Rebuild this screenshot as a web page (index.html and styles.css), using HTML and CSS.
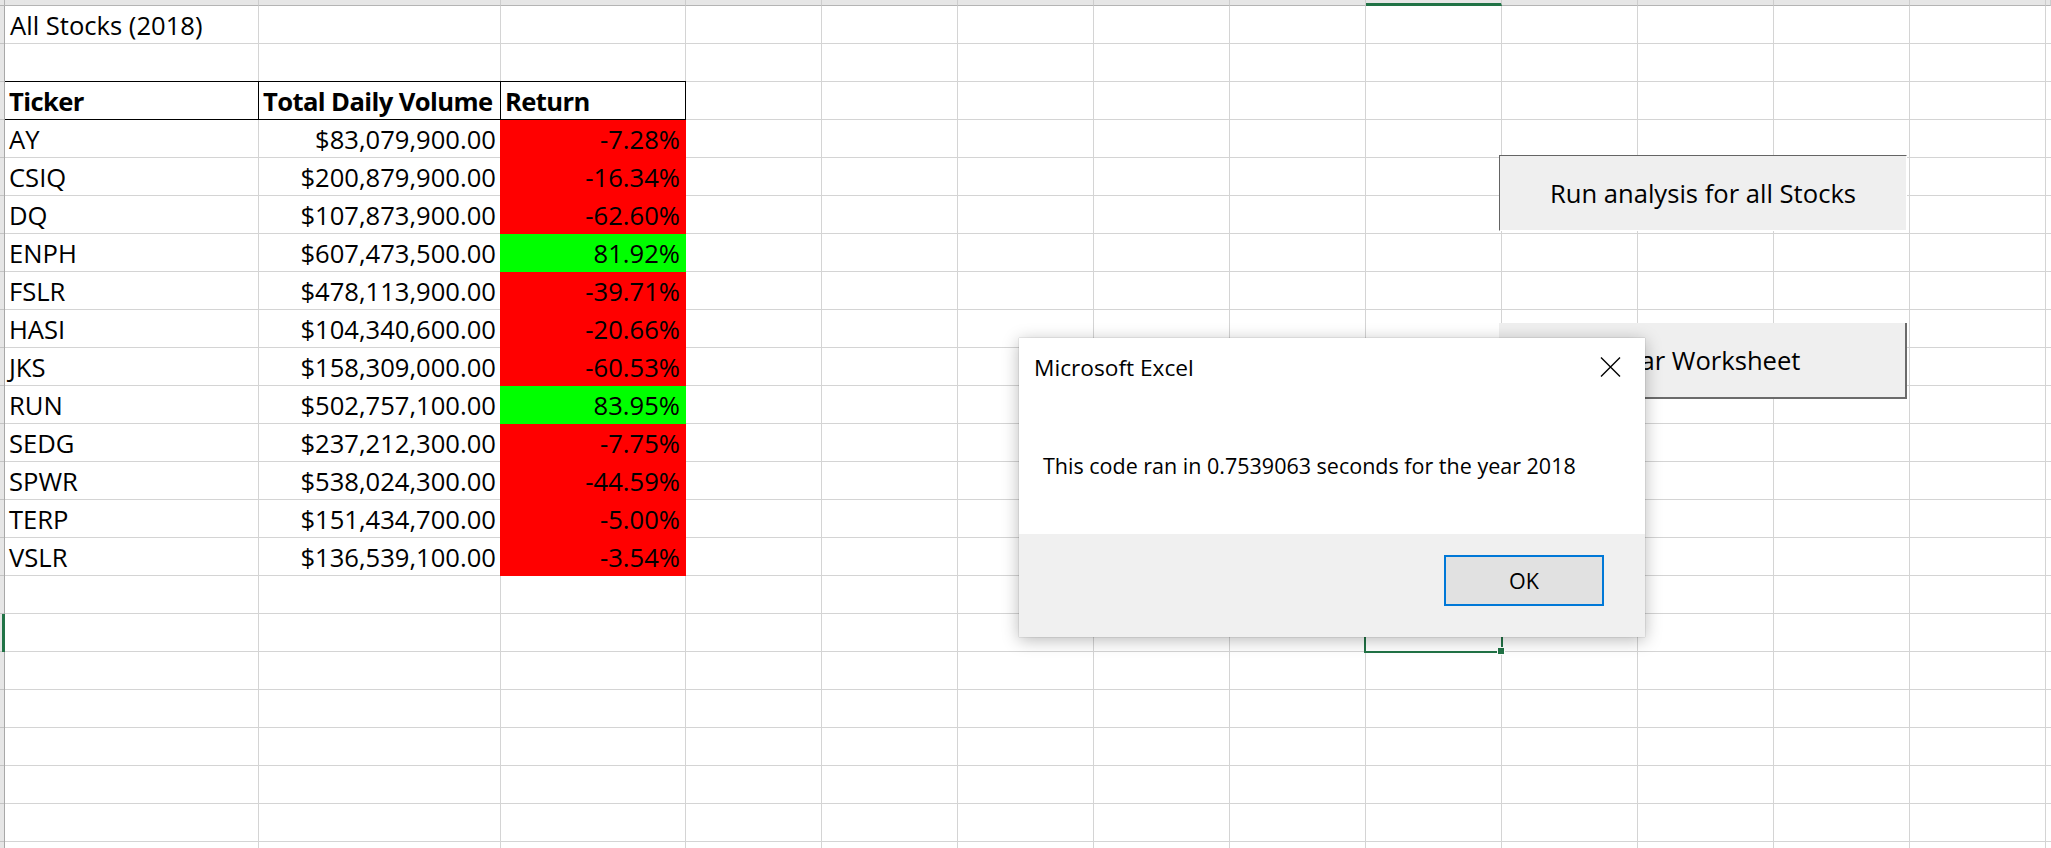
FILE: index.html
```html
<!DOCTYPE html>
<html lang="en">
<head>
<meta charset="utf-8">
<title>All Stocks (2018)</title>
<link rel="stylesheet" href="styles.css">
</head>
<body>
<div class="excel">
  <div class="colhead">
    <div class="ch corner"></div>
    <div class="ch"></div><div class="ch"></div><div class="ch"></div>
    <div class="ch"></div><div class="ch"></div><div class="ch"></div>
    <div class="ch"></div><div class="ch"></div><div class="ch sel"></div>
    <div class="ch"></div><div class="ch"></div><div class="ch"></div>
    <div class="ch"></div><div class="ch"></div>
  </div>
  <div class="sheet">
    <div class="rowhead"><div class="rowhead-sel"></div></div>
    <div class="grid">
      <div class="table">
        <div class="c title">All Stocks (2018)</div><div class="c"></div><div class="c"></div>
        <div class="c"></div><div class="c"></div><div class="c"></div>
        <div class="c h">Ticker</div><div class="c h">Total Daily Volume</div><div class="c h">Return</div>

        <div class="c">AY</div><div class="c num">$83,079,900.00</div><div class="c num ret neg">-7.28%</div>
        <div class="c">CSIQ</div><div class="c num">$200,879,900.00</div><div class="c num ret neg">-16.34%</div>
        <div class="c">DQ</div><div class="c num">$107,873,900.00</div><div class="c num ret neg">-62.60%</div>
        <div class="c">ENPH</div><div class="c num">$607,473,500.00</div><div class="c num ret pos">81.92%</div>
        <div class="c">FSLR</div><div class="c num">$478,113,900.00</div><div class="c num ret neg">-39.71%</div>
        <div class="c">HASI</div><div class="c num">$104,340,600.00</div><div class="c num ret neg">-20.66%</div>
        <div class="c">JKS</div><div class="c num">$158,309,000.00</div><div class="c num ret neg">-60.53%</div>
        <div class="c">RUN</div><div class="c num">$502,757,100.00</div><div class="c num ret pos">83.95%</div>
        <div class="c">SEDG</div><div class="c num">$237,212,300.00</div><div class="c num ret neg">-7.75%</div>
        <div class="c">SPWR</div><div class="c num">$538,024,300.00</div><div class="c num ret neg">-44.59%</div>
        <div class="c">TERP</div><div class="c num">$151,434,700.00</div><div class="c num ret neg">-5.00%</div>
        <div class="c">VSLR</div><div class="c num">$136,539,100.00</div><div class="c num ret neg">-3.54%</div>
      </div>

      <div class="selection"><span class="handle"></span></div>

      <button class="form-btn run">Run analysis for all Stocks</button>
      <button class="form-btn clear">Clear Worksheet</button>
    </div>
  </div>

  <div class="dialog" role="dialog">
    <div class="dlg-body">
      <div class="dlg-titlebar">
        <span class="dlg-title">Microsoft Excel</span>
        <svg class="dlg-close" width="21" height="20" viewBox="0 0 21 20" aria-label="Close">
          <path d="M1 0.5 L20 19.5 M20 0.5 L1 19.5" stroke="#000" stroke-width="1.4" fill="none"/>
        </svg>
      </div>
      <p class="dlg-msg">This code ran in 0.7539063 seconds for the year 2018</p>
    </div>
    <div class="dlg-footer">
      <button class="dlg-ok">OK</button>
    </div>
  </div>
</div>
</body>
</html>
```
FILE: styles.css
```css
* { box-sizing: border-box; margin: 0; padding: 0; }

html, body {
  width: 2051px;
  height: 848px;
  overflow: hidden;
  background: #ffffff;
}

body {
  font-family: "Open Sans", "Liberation Sans", sans-serif;
  color: #000;
}

.excel {
  position: relative;
  width: 2051px;
  height: 848px;
  display: flex;
  flex-direction: column;
}

/* ---------- column header strip ---------- */
.colhead {
  display: grid;
  grid-template-columns: 5px 254px 242px 185px repeat(10, 136px) 1fr;
  height: 6px;
  flex: none;
  background: #e6e6e6;
}
.ch {
  border-right: 1px solid #cdcdcd;
  border-bottom: 1px solid #b4b4b4;
}
.ch.corner { border-right-color: #b4b4b4; }
.ch.sel { border-bottom: 3px solid #217346; }

/* ---------- sheet ---------- */
.sheet {
  flex: 1;
  display: flex;
  min-height: 0;
}

.rowhead {
  width: 5px;
  flex: none;
  display: grid;
  grid-template-rows: repeat(23, 38px);
  background-color: #e6e6e6;
  background-image: repeating-linear-gradient(to bottom, transparent 0 37px, #c4c4c4 37px 38px);
  border-right: 1px solid #a8a8a8;
}
.rowhead-sel {
  grid-row: 17;
  background: #217346;
  margin-left: 2px;
  margin-right: -1px;
}

.grid {
  flex: 1;
  position: relative;
  background-color: #fff;
  background-image:
    repeating-linear-gradient(to bottom, transparent 0 37px, #d4d4d4 37px 38px),
    linear-gradient(#d4d4d4, #d4d4d4),
    linear-gradient(#d4d4d4, #d4d4d4),
    repeating-linear-gradient(to right, transparent 0 135px, #d4d4d4 135px 136px);
  background-repeat: repeat, no-repeat, no-repeat, no-repeat;
  background-position: 0 0, 253px 0, 495px 0, 545px 0;
  background-size: 100% 100%, 1px 100%, 1px 100%, calc(100% - 545px) 100%;
}

/* ---------- data table ---------- */
.table {
  display: grid;
  grid-template-columns: 254px 242px 185px;
  grid-auto-rows: 38px;
  width: max-content;
}
.c {
  border-right: 1px solid #d4d4d4;
  border-bottom: 1px solid #d4d4d4;
  font-size: 25.6px;
  line-height: 35px;
  padding: 2px 4px 0;
  white-space: nowrap;
  overflow: visible;
}
.title { padding-left: 5px; }
.num { text-align: right; }
.ret { padding-right: 5px; }

.h {
  font-weight: 700;
  letter-spacing: -0.6px;
  border-color: #000;
  box-shadow: 0 -1px 0 #000;
}

.neg {
  background: #ff0000;
  border-color: #ff0000;
  box-shadow: -1px 0 0 #ff0000;
}
.pos {
  background: #00ff00;
  border-color: #00ff00;
  box-shadow: -1px 0 0 #00ff00;
}

/* ---------- active cell selection ---------- */
.selection {
  position: absolute;
  left: 1359px;
  top: 606px;
  width: 139px;
  height: 41px;
  border: 2px solid #217346;
}
.handle {
  position: absolute;
  right: -4px;
  bottom: -4px;
  width: 8px;
  height: 8px;
  background: #217346;
  border: 1px solid #ffffff;
}

/* ---------- form buttons on sheet ---------- */
.form-btn {
  position: absolute;
  left: 1494px;
  width: 408px;
  height: 76px;
  background: #efefef;
  font-family: "Open Sans", "Liberation Sans", sans-serif;
  font-size: 25.6px;
  color: #000;
  text-align: center;
  border: 0;
}
.form-btn.run {
  top: 149px;
  border-top: 1px solid #646464;
  border-left: 1px solid #646464;
  border-right: 1px solid #ffffff;
  border-bottom: 1px solid #ffffff;
}
.form-btn.clear {
  top: 317px;
  border-right: 2px solid #6b6b6b;
  border-bottom: 2px solid #6b6b6b;
}

/* ---------- message box ---------- */
.dialog {
  position: absolute;
  left: 1019px;
  top: 338px;
  width: 626px;
  height: 299px;
  display: flex;
  flex-direction: column;
  background: #fff;
  box-shadow: 0 0 1px rgba(0, 0, 0, 0.35), 0 3px 16px rgba(0, 0, 0, 0.28);
}
.dlg-body {
  height: 196px;
  flex: none;
  background: #fff;
}
.dlg-titlebar {
  display: flex;
  justify-content: space-between;
  align-items: flex-start;
  padding: 14px 24px 0 15px;
}
.dlg-title {
  font-size: 22.7px;
  line-height: 31px;
}
.dlg-close {
  margin-top: 5px;
}
.dlg-msg {
  margin-top: 67px;
  padding-left: 24px;
  font-size: 21.5px;
  line-height: 31px;
}
.dlg-footer {
  flex: 1;
  background: #f0f0f0;
  display: flex;
  justify-content: flex-end;
  align-items: flex-start;
  padding: 21px 41px 0 0;
}
.dlg-ok {
  width: 160px;
  height: 51px;
  background: #e1e1e1;
  border: 2px solid #0078d7;
  font-family: "Open Sans", "Liberation Sans", sans-serif;
  font-size: 21.5px;
  color: #000;
}
```
